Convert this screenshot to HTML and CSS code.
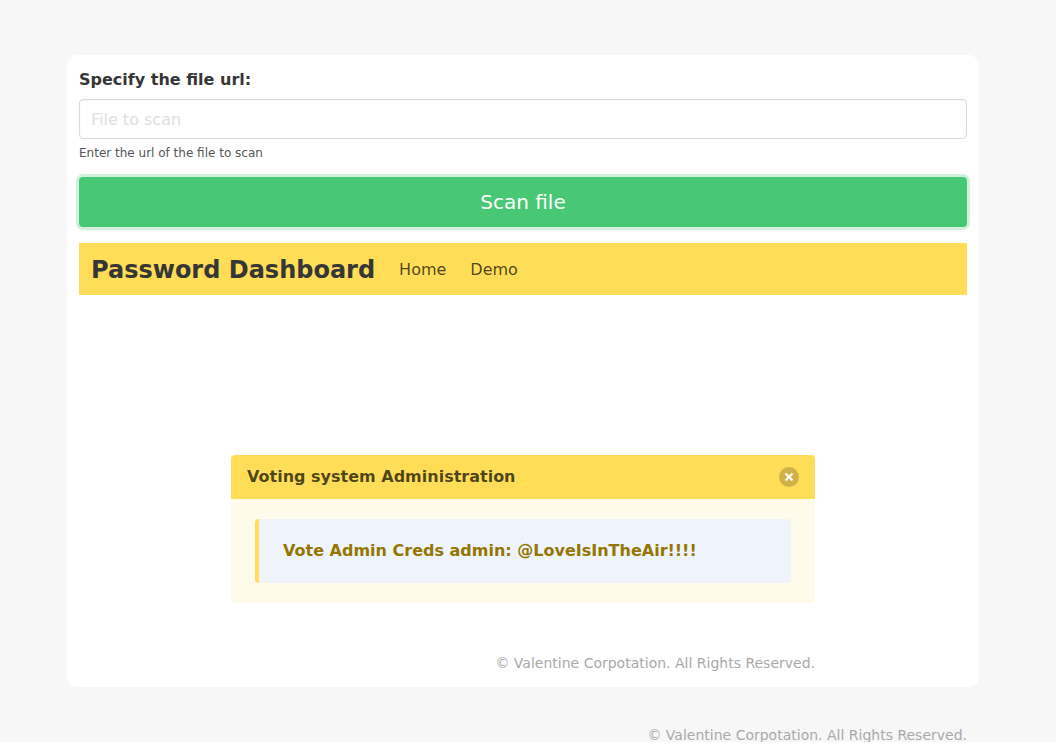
FILE: index.html
```html
<!DOCTYPE html>
<html lang="en">
<head>
<meta charset="utf-8">
<meta name="viewport" content="width=device-width, initial-scale=1">
<title>Password Dashboard</title>
<link rel="stylesheet" href="styles.css">
</head>
<body>
<div class="page">
  <main class="card">
    <form class="scan-form">
      <label class="label" for="file">Specify the file url:</label>
      <input class="input" id="file" type="text" placeholder="File to scan">
      <p class="help">Enter the url of the file to scan</p>
      <button class="button" type="button">Scan file</button>
    </form>
    <nav class="navbar">
      <a class="brand" href="#">Password Dashboard</a>
      <a class="nav-link" href="#">Home</a>
      <a class="nav-link" href="#">Demo</a>
    </nav>
    <section class="content">
      <article class="message">
        <header class="message-header">
          <p>Voting system Administration</p>
          <button class="delete" type="button" aria-label="delete"></button>
        </header>
        <div class="message-body">
          <blockquote class="quote">Vote Admin Creds admin: @LoveIsInTheAir!!!!</blockquote>
        </div>
      </article>
      <p class="copyright">© Valentine Corpotation. All Rights Reserved.</p>
    </section>
  </main>
  <footer class="copyright page-footer">© Valentine Corpotation. All Rights Reserved.</footer>
</div>
</body>
</html>
```
FILE: styles.css
```css
*, *::before, *::after { box-sizing: border-box; }
html { background: #fff; }
body {
  margin: 0;
  color: #4a4a4a;
  font: 16px/26px "DejaVu Sans", sans-serif;
}
p, blockquote { margin: 0; }
a { text-decoration: none; }
.page {
  padding: 55px 77px 0 67px;
  background: #f7f7f7;
}
.card {
  padding: 12px;
  background: #fff;
  border-radius: 10px;
}
.scan-form { margin-bottom: 16px; }
.label {
  display: block;
  margin-bottom: 6px;
  color: #363636;
  font-weight: 700;
}
.input {
  display: block;
  width: 100%;
  height: 40px;
  padding: 0 11px;
  border: 1px solid #dbdbdb;
  border-radius: 4px;
  background: #fff;
  color: #363636;
  font: inherit;
  box-shadow: inset 0 1px 2px rgba(10, 10, 10, 0.05);
}
.input::placeholder { color: #e0e0e0; opacity: 1; }
.help {
  margin: 4px 0 14px;
  color: #555;
  font-size: 12px;
  line-height: 20px;
}
.button {
  display: block;
  width: 100%;
  height: 50px;
  border: 0;
  border-radius: 4px;
  background: #48c774;
  color: #fff;
  font: 20px/30px "DejaVu Sans", sans-serif;
  box-shadow: 0 0 0 3px rgba(72, 199, 116, 0.25);
}
.navbar {
  display: flex;
  align-items: center;
  gap: 24px;
  height: 52px;
  padding: 2px 12px 0;
  background: #ffdd57;
}
.brand {
  color: #363636;
  font-size: 24px;
  font-weight: 700;
}
.nav-link { color: rgba(0, 0, 0, 0.7); }
.content { padding: 160px 152px 0; }
.message {
  margin-bottom: 48px;
  border-radius: 4px;
  background: #fffbeb;
}
.message-header {
  display: flex;
  align-items: center;
  justify-content: space-between;
  padding: 9px 16px;
  border-radius: 4px 4px 0 0;
  background: #ffdd57;
  color: rgba(0, 0, 0, 0.7);
  font-weight: 700;
}
.delete {
  position: relative;
  width: 20px;
  height: 20px;
  padding: 0;
  border: 0;
  border-radius: 50%;
  background: rgba(10, 10, 10, 0.2);
}
.delete::before, .delete::after {
  content: "";
  position: absolute;
  top: 50%;
  left: 50%;
  width: 10px;
  height: 2px;
  background: #fff;
  transform: translate(-50%, -50%) rotate(45deg);
}
.delete::after { transform: translate(-50%, -50%) rotate(-45deg); }
.message-body { padding: 20px 24px; }
.quote {
  padding: 19px 24px;
  border-left: 4px solid #ffdd57;
  border-radius: 4px;
  background: #eef3fc;
  color: #947600;
  font-weight: 700;
}
.copyright {
  color: #a9a9a9;
  font-size: 14px;
  line-height: 24px;
  text-align: right;
}
.page-footer {
  padding: 36px 12px 0;
  height: 55px;
}
```
